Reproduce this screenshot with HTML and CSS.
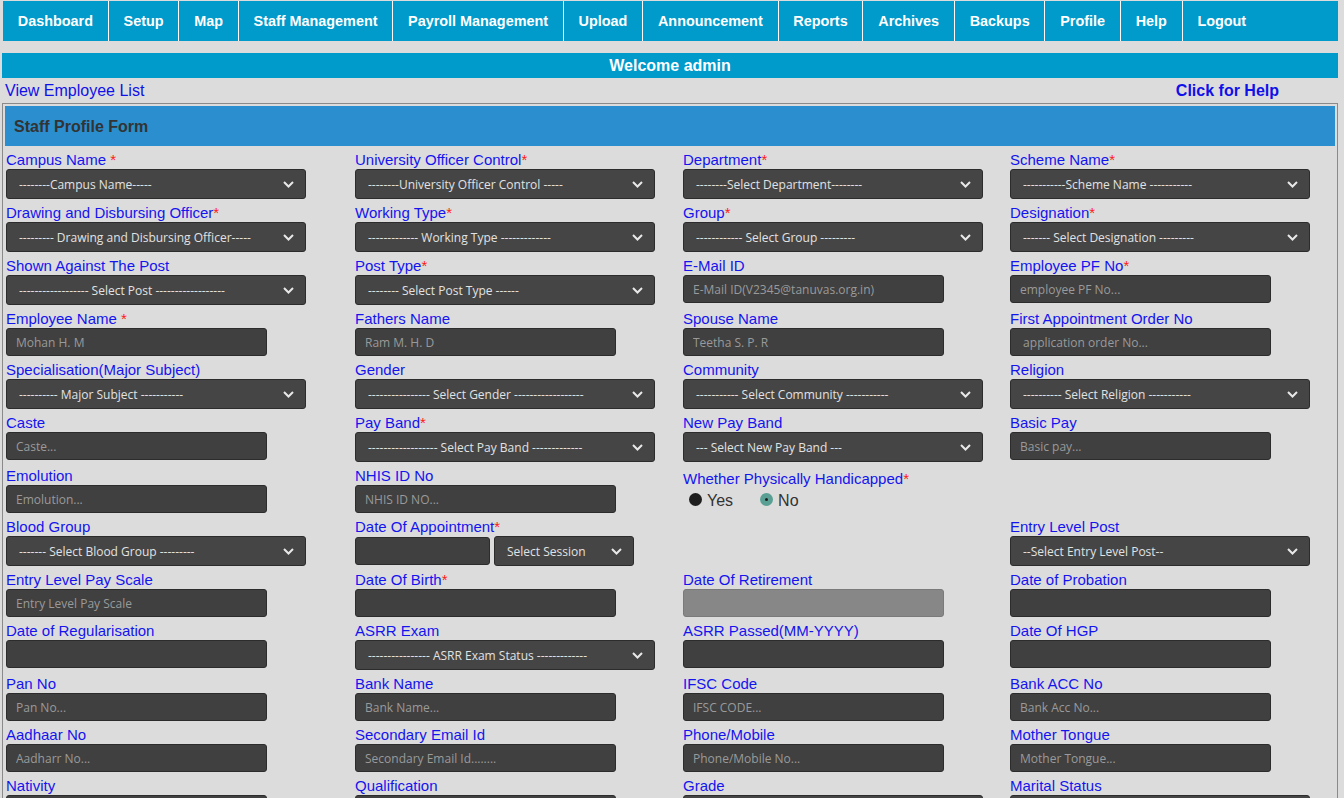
FILE: index.html
```html
<!DOCTYPE html>
<html>
<head>
<meta charset="utf-8">
<title>Staff Profile Form</title>
<link rel="stylesheet" href="styles.css">
</head>
<body>
<nav class="nav">
  <ul class="menu">
    <li><a href="#">Dashboard</a></li>
    <li><a href="#">Setup</a></li>
    <li><a href="#">Map</a></li>
    <li><a href="#">Staff Management</a></li>
    <li><a href="#">Payroll Management</a></li>
    <li><a href="#">Upload</a></li>
    <li><a href="#">Announcement</a></li>
    <li><a href="#">Reports</a></li>
    <li><a href="#">Archives</a></li>
    <li><a href="#">Backups</a></li>
    <li><a href="#">Profile</a></li>
    <li><a href="#">Help</a></li>
    <li class="last"><a href="#">Logout</a></li>
  </ul>
</nav>
<div class="welcome">Welcome admin</div>
<div class="links">
  <a href="#" class="view-link">View Employee List</a>
  <a href="#" class="help-link">Click for Help</a>
</div>
<div class="form-box">
  <div class="form-head">Staff Profile Form</div>
  <div class="grid">
    <!-- row 1 -->
    <div class="cell"><label>Campus Name <span class="req">*</span></label><div class="sel"><select><option>--------Campus Name-----</option></select><span class="chev"><svg width="11" height="7" viewBox="0 0 11 7"><path d="M1 1l4.5 4.5L10 1" fill="none" stroke="#e8e8e8" stroke-width="2"/></svg></span></div></div>
    <div class="cell"><label>University Officer Control<span class="req">*</span></label><div class="sel"><select><option>--------University Officer Control -----</option></select><span class="chev"><svg width="11" height="7" viewBox="0 0 11 7"><path d="M1 1l4.5 4.5L10 1" fill="none" stroke="#e8e8e8" stroke-width="2"/></svg></span></div></div>
    <div class="cell"><label>Department<span class="req">*</span></label><div class="sel"><select><option>--------Select Department--------</option></select><span class="chev"><svg width="11" height="7" viewBox="0 0 11 7"><path d="M1 1l4.5 4.5L10 1" fill="none" stroke="#e8e8e8" stroke-width="2"/></svg></span></div></div>
    <div class="cell"><label>Scheme Name<span class="req">*</span></label><div class="sel"><select><option>-----------Scheme Name -----------</option></select><span class="chev"><svg width="11" height="7" viewBox="0 0 11 7"><path d="M1 1l4.5 4.5L10 1" fill="none" stroke="#e8e8e8" stroke-width="2"/></svg></span></div></div>
    <!-- row 2 -->
    <div class="cell"><label>Drawing and Disbursing Officer<span class="req">*</span></label><div class="sel"><select><option>--------- Drawing and Disbursing Officer-----</option></select><span class="chev"><svg width="11" height="7" viewBox="0 0 11 7"><path d="M1 1l4.5 4.5L10 1" fill="none" stroke="#e8e8e8" stroke-width="2"/></svg></span></div></div>
    <div class="cell"><label>Working Type<span class="req">*</span></label><div class="sel"><select><option>------------- Working Type -------------</option></select><span class="chev"><svg width="11" height="7" viewBox="0 0 11 7"><path d="M1 1l4.5 4.5L10 1" fill="none" stroke="#e8e8e8" stroke-width="2"/></svg></span></div></div>
    <div class="cell"><label>Group<span class="req">*</span></label><div class="sel"><select><option>------------ Select Group ---------</option></select><span class="chev"><svg width="11" height="7" viewBox="0 0 11 7"><path d="M1 1l4.5 4.5L10 1" fill="none" stroke="#e8e8e8" stroke-width="2"/></svg></span></div></div>
    <div class="cell"><label>Designation<span class="req">*</span></label><div class="sel"><select><option>------- Select Designation ---------</option></select><span class="chev"><svg width="11" height="7" viewBox="0 0 11 7"><path d="M1 1l4.5 4.5L10 1" fill="none" stroke="#e8e8e8" stroke-width="2"/></svg></span></div></div>
    <!-- row 3 -->
    <div class="cell"><label>Shown Against The Post</label><div class="sel"><select><option>------------------ Select Post ------------------</option></select><span class="chev"><svg width="11" height="7" viewBox="0 0 11 7"><path d="M1 1l4.5 4.5L10 1" fill="none" stroke="#e8e8e8" stroke-width="2"/></svg></span></div></div>
    <div class="cell"><label>Post Type<span class="req">*</span></label><div class="sel"><select><option>-------- Select Post Type ------</option></select><span class="chev"><svg width="11" height="7" viewBox="0 0 11 7"><path d="M1 1l4.5 4.5L10 1" fill="none" stroke="#e8e8e8" stroke-width="2"/></svg></span></div></div>
    <div class="cell"><label>E-Mail ID</label><input class="txt" placeholder="E-Mail ID(V2345@tanuvas.org.in)"></div>
    <div class="cell"><label>Employee PF No<span class="req">*</span></label><input class="txt" placeholder="employee PF No..."></div>
    <!-- row 4 -->
    <div class="cell"><label>Employee Name <span class="req">*</span></label><input class="txt" placeholder="Mohan H. M"></div>
    <div class="cell"><label>Fathers Name</label><input class="txt" placeholder="Ram M. H. D"></div>
    <div class="cell"><label>Spouse Name</label><input class="txt" placeholder="Teetha S. P. R"></div>
    <div class="cell"><label>First Appointment Order No</label><input class="txt" placeholder=" application order No..."></div>
    <!-- row 5 -->
    <div class="cell"><label>Specialisation(Major Subject)</label><div class="sel"><select><option>---------- Major Subject -----------</option></select><span class="chev"><svg width="11" height="7" viewBox="0 0 11 7"><path d="M1 1l4.5 4.5L10 1" fill="none" stroke="#e8e8e8" stroke-width="2"/></svg></span></div></div>
    <div class="cell"><label>Gender</label><div class="sel"><select><option>---------------- Select Gender ------------------</option></select><span class="chev"><svg width="11" height="7" viewBox="0 0 11 7"><path d="M1 1l4.5 4.5L10 1" fill="none" stroke="#e8e8e8" stroke-width="2"/></svg></span></div></div>
    <div class="cell"><label>Community</label><div class="sel"><select><option>----------- Select Community -----------</option></select><span class="chev"><svg width="11" height="7" viewBox="0 0 11 7"><path d="M1 1l4.5 4.5L10 1" fill="none" stroke="#e8e8e8" stroke-width="2"/></svg></span></div></div>
    <div class="cell"><label>Religion</label><div class="sel"><select><option>---------- Select Religion -----------</option></select><span class="chev"><svg width="11" height="7" viewBox="0 0 11 7"><path d="M1 1l4.5 4.5L10 1" fill="none" stroke="#e8e8e8" stroke-width="2"/></svg></span></div></div>
    <!-- row 6 -->
    <div class="cell"><label>Caste</label><input class="txt" placeholder="Caste..."></div>
    <div class="cell"><label>Pay Band<span class="req">*</span></label><div class="sel"><select><option>------------------ Select Pay Band -------------</option></select><span class="chev"><svg width="11" height="7" viewBox="0 0 11 7"><path d="M1 1l4.5 4.5L10 1" fill="none" stroke="#e8e8e8" stroke-width="2"/></svg></span></div></div>
    <div class="cell"><label>New Pay Band</label><div class="sel"><select><option>--- Select New Pay Band ---</option></select><span class="chev"><svg width="11" height="7" viewBox="0 0 11 7"><path d="M1 1l4.5 4.5L10 1" fill="none" stroke="#e8e8e8" stroke-width="2"/></svg></span></div></div>
    <div class="cell"><label>Basic Pay</label><input class="txt" placeholder="Basic pay..."></div>
    <!-- row 7 -->
    <div class="cell"><label>Emolution</label><input class="txt" placeholder="Emolution..."></div>
    <div class="cell"><label>NHIS ID No</label><input class="txt" placeholder="NHIS ID NO..."></div>
    <div class="cell radio-cell"><label>Whether Physically Handicapped<span class="req">*</span></label>
      <div class="radios">
        <span class="radio"><span class="dot dot-off"></span>Yes</span>
        <span class="radio"><span class="dot dot-on"><span class="pin"></span></span>No</span>
      </div>
    </div>
    <div class="cell"></div>
    <!-- row 8 -->
    <div class="cell"><label>Blood Group</label><div class="sel"><select><option>------- Select Blood Group ---------</option></select><span class="chev"><svg width="11" height="7" viewBox="0 0 11 7"><path d="M1 1l4.5 4.5L10 1" fill="none" stroke="#e8e8e8" stroke-width="2"/></svg></span></div></div>
    <div class="cell"><label>Date Of Appointment<span class="req">*</span></label>
      <div class="pair">
        <input class="txt short">
        <div class="sel sel-small"><select><option>Select Session</option></select><span class="chev"><svg width="11" height="7" viewBox="0 0 11 7"><path d="M1 1l4.5 4.5L10 1" fill="none" stroke="#e8e8e8" stroke-width="2"/></svg></span></div>
      </div>
    </div>
    <div class="cell"></div>
    <div class="cell"><label>Entry Level Post</label><div class="sel"><select><option>--Select Entry Level Post--</option></select><span class="chev"><svg width="11" height="7" viewBox="0 0 11 7"><path d="M1 1l4.5 4.5L10 1" fill="none" stroke="#e8e8e8" stroke-width="2"/></svg></span></div></div>
    <!-- row 9 -->
    <div class="cell"><label>Entry Level Pay Scale</label><input class="txt" placeholder="Entry Level Pay Scale"></div>
    <div class="cell"><label>Date Of Birth<span class="req">*</span></label><input class="txt"></div>
    <div class="cell"><label>Date Of Retirement</label><input class="txt disabled" disabled></div>
    <div class="cell"><label>Date of Probation</label><input class="txt"></div>
    <!-- row 10 -->
    <div class="cell"><label>Date of Regularisation</label><input class="txt"></div>
    <div class="cell"><label>ASRR Exam</label><div class="sel"><select><option>---------------- ASRR Exam Status -------------</option></select><span class="chev"><svg width="11" height="7" viewBox="0 0 11 7"><path d="M1 1l4.5 4.5L10 1" fill="none" stroke="#e8e8e8" stroke-width="2"/></svg></span></div></div>
    <div class="cell"><label>ASRR Passed(MM-YYYY)</label><input class="txt"></div>
    <div class="cell"><label>Date Of HGP</label><input class="txt"></div>
    <!-- row 11 -->
    <div class="cell"><label>Pan No</label><input class="txt" placeholder="Pan No..."></div>
    <div class="cell"><label>Bank Name</label><input class="txt" placeholder="Bank Name..."></div>
    <div class="cell"><label>IFSC Code</label><input class="txt" placeholder="IFSC CODE..."></div>
    <div class="cell"><label>Bank ACC No</label><input class="txt" placeholder="Bank Acc No..."></div>
    <!-- row 12 -->
    <div class="cell"><label>Aadhaar No</label><input class="txt" placeholder="Aadharr No..."></div>
    <div class="cell"><label>Secondary Email Id</label><input class="txt" placeholder="Secondary Email Id........"></div>
    <div class="cell"><label>Phone/Mobile</label><input class="txt" placeholder="Phone/Mobile No..."></div>
    <div class="cell"><label>Mother Tongue</label><input class="txt" placeholder="Mother Tongue..."></div>
    <!-- row 13 -->
    <div class="cell"><label>Nativity</label><input class="txt" placeholder="Nativity..."></div>
    <div class="cell"><label>Qualification</label><input class="txt" placeholder="Qualification..."></div>
    <div class="cell"><label>Grade</label><div class="sel"><select><option>---------- Select Grade ----------</option></select><span class="chev"><svg width="11" height="7" viewBox="0 0 11 7"><path d="M1 1l4.5 4.5L10 1" fill="none" stroke="#e8e8e8" stroke-width="2"/></svg></span></div></div>
    <div class="cell"><label>Marital Status</label><div class="sel"><select><option>---------- Marital Status ----------</option></select><span class="chev"><svg width="11" height="7" viewBox="0 0 11 7"><path d="M1 1l4.5 4.5L10 1" fill="none" stroke="#e8e8e8" stroke-width="2"/></svg></span></div></div>
  </div>
</div>
</body>
</html>
```

FILE: styles.css
```css
html, body {
  margin: 0;
  padding: 0;
}
body {
  background: #dcdcdc;
  font-family: "Liberation Sans", Arial, sans-serif;
  padding: 1px 6px 0 2px;
}
.nav {
  margin-left: 1px;
}
.menu {
  list-style: none;
  margin: 0;
  padding: 0;
  display: flex;
  background: #009acb;
  height: 40px;
}
.menu li {
  border-right: 1px solid #ffffff;
}
.menu li.last {
  border-right: none;
}
.menu a {
  display: block;
  padding: 0 14.8px 0 14.8px;
  line-height: 40px;
  color: #ffffff;
  font-weight: bold;
  font-size: 14.4px;
  text-decoration: none;
}
.welcome {
  margin-top: 12px;
  background: #009acb;
  color: #ffffff;
  font-weight: bold;
  font-size: 16px;
  height: 25px;
  line-height: 25px;
  text-align: center;
}
.links {
  display: flex;
  justify-content: space-between;
  height: 25px;
  line-height: 25px;
  padding-left: 3px;
  padding-right: 59px;
}
.links a {
  color: #1010e8;
  font-size: 16px;
  text-decoration: none;
}
.links .help-link {
  font-weight: bold;
}
.form-box {
  border: 1px solid #8a8a8a;
  padding: 2px 2px 0 2px;
}
.form-head {
  background: #2a8ecf;
  height: 40px;
  line-height: 41px;
  padding-left: 9px;
  color: #333333;
  font-weight: bold;
  font-size: 16px;
}
.grid {
  display: grid;
  grid-template-columns: 349px 328px 327px 1fr;
  align-items: start;
  padding: 5px 0 0 1px;
}
.cell {
  display: flex;
  flex-direction: column;
  align-items: flex-start;
  padding-bottom: 5px;
}
.cell label {
  font-size: 15px;
  line-height: 17px;
  height: 17px;
  color: #1414ee;
  margin-bottom: 1px;
  white-space: nowrap;
}
.req {
  color: #ff1a1a;
}
.sel {
  position: relative;
  width: 300px;
  height: 30px;
}
.sel select {
  appearance: none;
  -webkit-appearance: none;
  width: 100%;
  height: 100%;
  background: #454545;
  border: 1px solid #2c2c2c;
  border-radius: 3px;
  color: #e2e2e2;
  font-family: "Open Sans", "Noto Sans", sans-serif;
  font-size: 12px;
  padding: 0 30px 0 12px;
  margin: 0;
}
.chev {
  position: absolute;
  right: 12px;
  top: 12px;
  width: 11px;
  height: 7px;
  pointer-events: none;
  display: flex;
}
.txt {
  width: 261px;
  height: 28px;
  box-sizing: border-box;
  background: #404040;
  border: 1px solid #2c2c2c;
  border-radius: 3px;
  color: #e2e2e2;
  font-family: "Open Sans", "Noto Sans", sans-serif;
  font-size: 12px;
  padding: 0 9px;
  margin: 0;
}
.txt::placeholder {
  color: #9a9a9a;
  opacity: 1;
}
.txt.disabled {
  background: #878787;
  border-color: #7a7a7a;
}
.pair {
  display: flex;
  gap: 4px;
  align-items: center;
}
.txt.short {
  width: 135px;
}
.sel-small {
  width: 140px;
}
.sel-small select {
  padding-left: 12px;
}
.radio-cell label {
  margin-top: 3px;
}
.radios {
  display: flex;
  gap: 27px;
  padding-left: 6px;
  margin-top: 4px;
  height: 18px;
  align-items: center;
}
.radio {
  display: flex;
  align-items: center;
  gap: 5px;
  font-size: 16px;
  color: #333333;
}
.dot {
  width: 13px;
  height: 13px;
  border-radius: 50%;
  display: flex;
  align-items: center;
  justify-content: center;
  margin-top: -3px;
}
.dot-off {
  background: #1e1e1e;
}
.dot-on {
  background: #5a9f93;
}
.pin {
  width: 3px;
  height: 3px;
  border-radius: 50%;
  background: #1e1e1e;
}
```
